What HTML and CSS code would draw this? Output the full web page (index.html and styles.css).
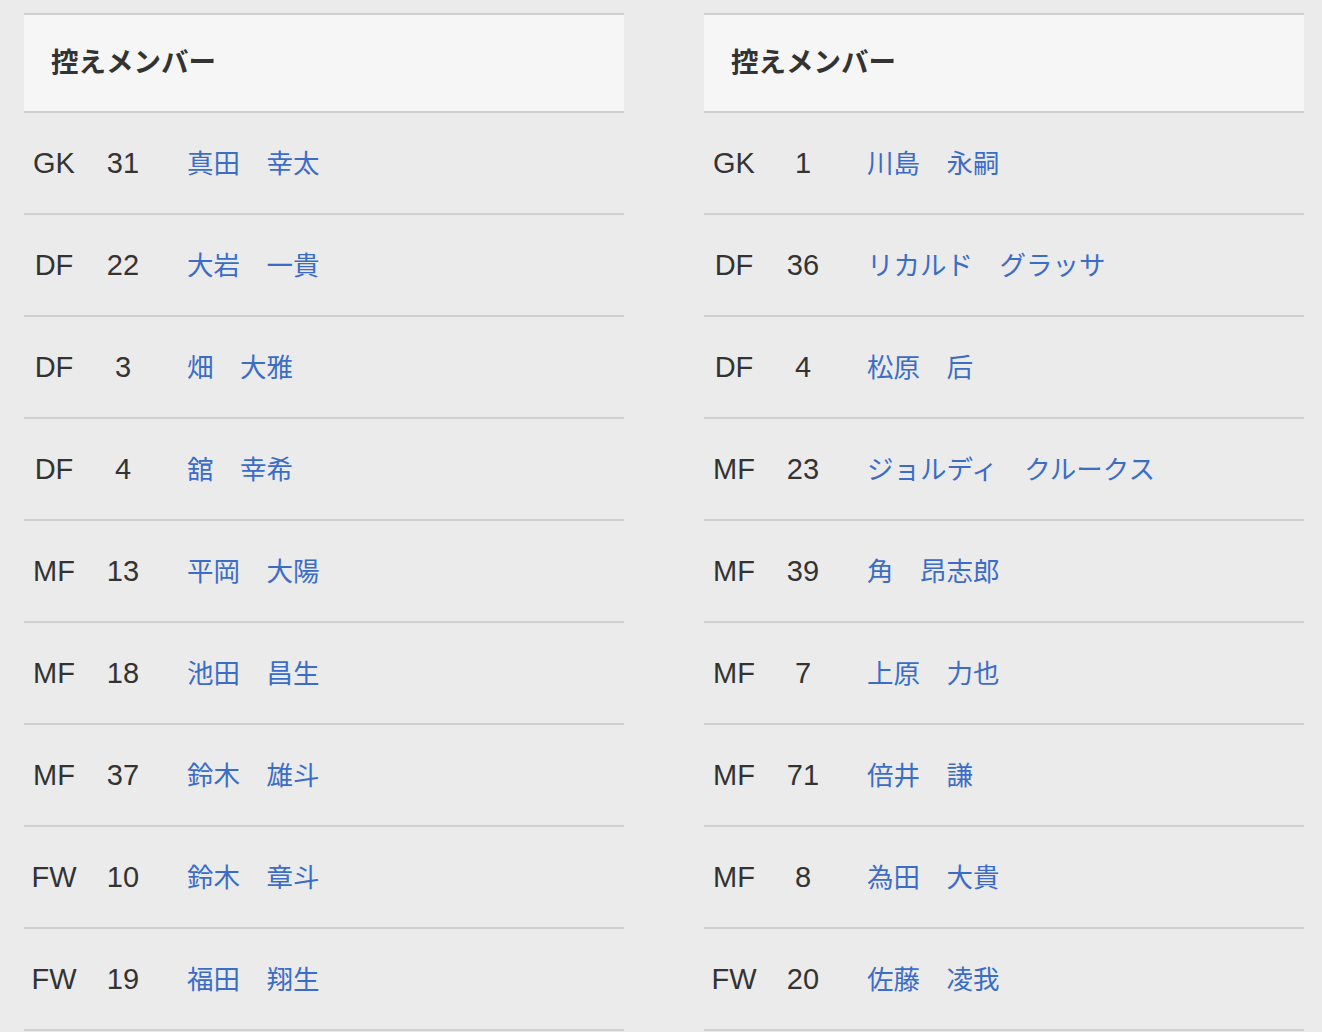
FILE: index.html
```html
<!DOCTYPE html>
<html lang="ja">
<head>
<meta charset="utf-8">
<title>控えメンバー</title>
<link rel="stylesheet" href="styles.css">
</head>
<body>
<div class="wrap">
  <section class="panel">
    <h2 class="panel-head">控えメンバー</h2>
    <div class="row"><span class="pos">GK</span><span class="num">31</span><a class="name">真田　幸太</a></div>
    <div class="row"><span class="pos">DF</span><span class="num">22</span><a class="name">大岩　一貴</a></div>
    <div class="row"><span class="pos">DF</span><span class="num">3</span><a class="name">畑　大雅</a></div>
    <div class="row"><span class="pos">DF</span><span class="num">4</span><a class="name">舘　幸希</a></div>
    <div class="row"><span class="pos">MF</span><span class="num">13</span><a class="name">平岡　大陽</a></div>
    <div class="row"><span class="pos">MF</span><span class="num">18</span><a class="name">池田　昌生</a></div>
    <div class="row"><span class="pos">MF</span><span class="num">37</span><a class="name">鈴木　雄斗</a></div>
    <div class="row"><span class="pos">FW</span><span class="num">10</span><a class="name">鈴木　章斗</a></div>
    <div class="row"><span class="pos">FW</span><span class="num">19</span><a class="name">福田　翔生</a></div>
  </section>
  <section class="panel">
    <h2 class="panel-head">控えメンバー</h2>
    <div class="row"><span class="pos">GK</span><span class="num">1</span><a class="name">川島　永嗣</a></div>
    <div class="row"><span class="pos">DF</span><span class="num">36</span><a class="name">リカルド　グラッサ</a></div>
    <div class="row"><span class="pos">DF</span><span class="num">4</span><a class="name">松原　后</a></div>
    <div class="row"><span class="pos">MF</span><span class="num">23</span><a class="name">ジョルディ　クルークス</a></div>
    <div class="row"><span class="pos">MF</span><span class="num">39</span><a class="name">角　昂志郎</a></div>
    <div class="row"><span class="pos">MF</span><span class="num">7</span><a class="name">上原　力也</a></div>
    <div class="row"><span class="pos">MF</span><span class="num">71</span><a class="name">倍井　謙</a></div>
    <div class="row"><span class="pos">MF</span><span class="num">8</span><a class="name">為田　大貴</a></div>
    <div class="row"><span class="pos">FW</span><span class="num">20</span><a class="name">佐藤　凌我</a></div>
  </section>
</div>
</body>
</html>
```

FILE: styles.css
```css
html, body {
  margin: 0;
  padding: 0;
  background: #ebebeb;
}
body {
  font-family: "Liberation Sans", "Noto Sans CJK JP", sans-serif;
  color: #333333;
}
.wrap {
  display: flex;
  gap: 80px;
  padding: 13px 24px 0 24px;
}
.panel {
  width: 600px;
  flex: 0 0 600px;
}
.panel-head {
  margin: 0;
  height: 90px;
  box-sizing: content-box;
  display: flex;
  align-items: center;
  padding: 0 0 6px 27px;
  background: #f6f6f6;
  border-top: 2px solid #cfcfcf;
  border-bottom: 2px solid #cfcfcf;
  font-family: "Noto Sans CJK JP", sans-serif;
  font-size: 27.5px;
  font-weight: 700;
  color: #333333;
}
.row {
  display: grid;
  grid-template-columns: 60px 78px 1fr;
  align-items: center;
  height: 100px;
  border-bottom: 2px solid #cfcfcf;
}
.pos, .num {
  text-align: center;
  font-family: "Liberation Sans", sans-serif;
  font-size: 29px;
  color: #333333;
}
.name {
  padding: 0 0 4px 25px;
  font-family: "Noto Sans CJK JP", sans-serif;
  font-size: 26.5px;
  color: #3c6dc6;
  text-decoration: none;
  white-space: nowrap;
}
```
